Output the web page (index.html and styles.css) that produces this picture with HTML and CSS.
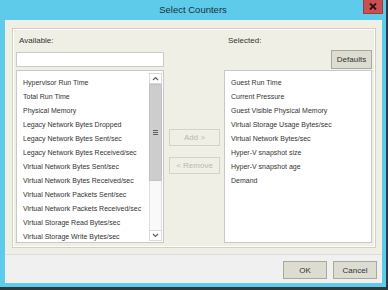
FILE: index.html
```html
<!DOCTYPE html>
<html lang="en">
<head>
    <meta charset="UTF-8">
    <title>Select Counters</title>
    <link rel="stylesheet" href="styles.css">
</head>
<body>
    <div class="window">
        <div class="titlebar">
            <span></span>
            <span class="title">Select Counters</span>
            <span class="close">
                <svg width="8" height="7" viewBox="0 0 8 7"><path d="M1 0.5L7 6.5M7 0.5L1 6.5" stroke="#2a1414" stroke-width="1.8"/></svg>
            </span>
        </div>

        <div class="client">
            <div class="content">
                <div class="group">
                    <div class="col">
                        <div class="label">Available:</div>
                        <div class="search"></div>
                        <div class="list">
                            <ul class="items">
                                <li>Hypervisor Run Time</li>
                                <li>Total Run Time</li>
                                <li>Physical Memory</li>
                                <li>Legacy Network Bytes Dropped</li>
                                <li>Legacy Network Bytes Sent/sec</li>
                                <li>Legacy Network Bytes Received/sec</li>
                                <li>Virtual Network Bytes Sent/sec</li>
                                <li>Virtual Network Bytes Received/sec</li>
                                <li>Virtual Network Packets Sent/sec</li>
                                <li>Virtual Network Packets Received/sec</li>
                                <li>Virtual Storage Read Bytes/sec</li>
                                <li>Virtual Storage Write Bytes/sec</li>
                            </ul>
                            <div class="scrollbar">
                                <div class="arrow">
                                    <svg width="7" height="5" viewBox="0 0 7 5"><path d="M1 4L3.5 1.5L6 4" fill="none" stroke="#606060" stroke-width="1.2"/></svg>
                                </div>
                                <div class="thumb">
                                    <svg width="5" height="5" viewBox="0 0 5 5"><path d="M0 0.5H5M0 2.5H5M0 4.5H5" stroke="#606060" stroke-width="1"/></svg>
                                </div>
                                <div class="track"></div>
                                <div class="arrow">
                                    <svg width="7" height="5" viewBox="0 0 7 5"><path d="M1 1L3.5 3.5L6 1" fill="none" stroke="#606060" stroke-width="1.2"/></svg>
                                </div>
                            </div>
                        </div>
                    </div>

                    <div class="mid">
                        <button class="btn move" disabled>Add &gt;</button>
                        <button class="btn move" disabled>&lt; Remove</button>
                    </div>

                    <div class="col">
                        <div class="label right">Selected:</div>
                        <div class="defaults-row">
                            <button class="btn defaults">Defaults</button>
                        </div>
                        <div class="list selected">
                            <ul class="items">
                                <li>Guest Run Time</li>
                                <li>Current Pressure</li>
                                <li>Guest Visible Physical Memory</li>
                                <li>Virtual Storage Usage Bytes/sec</li>
                                <li>Virtual Network Bytes/sec</li>
                                <li>Hyper-V snapshot size</li>
                                <li>Hyper-V snapshot age</li>
                                <li>Demand</li>
                            </ul>
                        </div>
                    </div>
                </div>
            </div>

            <div class="footer">
                <button class="btn footer-btn">OK</button>
                <button class="btn footer-btn">Cancel</button>
            </div>
        </div>
    </div>
</body>
</html>
```

FILE: styles.css
```css
html, body {
    margin: 0;
    padding: 0;
}

body {
    font-family: "Liberation Sans", Arial, sans-serif;
    color: #333;
}

.window {
    width: 388px;
    height: 290px;
    box-sizing: border-box;
    background-color: #5fcbea;
    border-right: 2px solid #2c3a40;
    border-bottom: 3px solid #2c3a40;
    display: flex;
    flex-direction: column;
}

.titlebar {
    height: 20px;
    flex: none;
    display: grid;
    grid-template-columns: 1fr auto 1fr;
    align-items: start;
}

.title {
    line-height: 20px;
    font-size: 9.5px;
    color: #1d2e38;
}

.close {
    justify-self: end;
    width: 20px;
    height: 14px;
    margin-right: 3px;
    box-sizing: border-box;
    background-color: #c75050;
    border: 1px solid #9c3d3d;
    border-top: none;
    display: flex;
    align-items: center;
    justify-content: center;
}

.client {
    flex: 1;
    margin: 0 4px 4px 5px;
    display: flex;
    flex-direction: column;
}

.content {
    height: 234px;
    flex: none;
    box-sizing: border-box;
    padding: 8px 6px 6px 7px;
    background-color: #f0efe6;
}

.group {
    height: 220px;
    box-sizing: border-box;
    border: 1px solid #d3d0c2;
    box-shadow: inset 0 0 0 1px #fff;
    padding: 5px 3px 4px 3px;
    display: grid;
    grid-template-columns: 148px 60px 148px;
}

.col {
    display: flex;
    flex-direction: column;
}

.label {
    height: 14px;
    line-height: 14px;
    font-size: 8px;
    padding-left: 3px;
}

.label.right {
    padding-left: 4px;
}

.search {
    margin-top: 4px;
    height: 15px;
    box-sizing: border-box;
    background-color: #fff;
    border: 1px solid #cacaca;
}

.defaults-row {
    margin-top: 2px;
    display: flex;
    justify-content: flex-end;
}

.list {
    margin-top: 3px;
    height: 173px;
    box-sizing: border-box;
    background-color: #fff;
    border: 1px solid #c8c8c8;
    display: flex;
    overflow: hidden;
}

.list.selected {
    margin-top: 1px;
}

.items {
    flex: 1;
    list-style: none;
    margin: 0;
    padding: 5px 0 0 6px;
    font-size: 7px;
    line-height: 14px;
    white-space: nowrap;
    overflow: hidden;
}

.scrollbar {
    width: 13px;
    margin: 2px 1px 1px 0;
    box-sizing: border-box;
    border-left: 1px solid #dedede;
    border-right: 1px solid #dedede;
    display: flex;
    flex-direction: column;
}

.arrow {
    height: 11px;
    flex: none;
    box-sizing: border-box;
    background-color: #fff;
    border: 1px solid #d9d9d9;
    margin: 0 -1px;
    display: flex;
    align-items: center;
    justify-content: center;
}

.thumb {
    height: 97px;
    flex: none;
    box-sizing: border-box;
    background-color: #cdcdcd;
    border: 1px solid #c2c2c2;
    margin: 0 -1px;
    display: flex;
    align-items: center;
    justify-content: center;
}

.track {
    flex: 1;
    background-color: #f9f9f9;
}

.mid {
    display: flex;
    flex-direction: column;
    align-items: flex-start;
    padding: 95px 0 0 5px;
    gap: 11px;
}

.btn {
    font-family: "Liberation Sans", Arial, sans-serif;
    font-size: 8px;
    color: #333;
    background-color: #dddcd1;
    border: 1px solid #a9a89c;
    border-radius: 0;
    padding: 0;
    margin: 0;
}

.move {
    width: 51px;
    height: 17px;
}

.move:disabled {
    background-color: #f0efe6;
    border-color: #d5d3c6;
    color: #b9b8b0;
}

.defaults {
    width: 41px;
    height: 19px;
}

.footer {
    flex: 1;
    background-color: #f0f0f0;
    border-top: 1px solid #dcdcdc;
    display: flex;
    justify-content: flex-end;
    align-items: flex-start;
    gap: 6px;
    padding: 6px 5px 0 0;
}

.footer-btn {
    width: 44px;
    height: 18px;
}
```
